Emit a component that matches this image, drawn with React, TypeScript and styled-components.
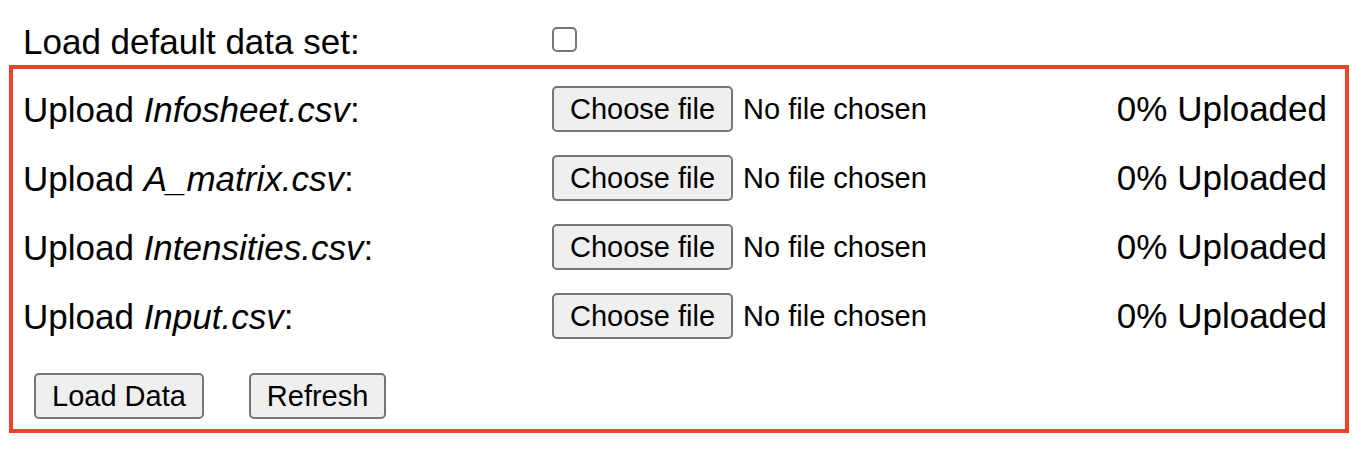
import { styled, createGlobalStyle } from "styled-components";

const GlobalStyle = createGlobalStyle`
  body {
    margin: 0;
    background: #ffffff;
    color: #000000;
    font-family: "Liberation Sans", Arial, Helvetica, sans-serif;
  }
`;

const Page = styled.div`
  padding-top: 22px;
`;

const TopRow = styled.div`
  display: grid;
  grid-template-columns: 529px auto;
  align-items: start;
  padding-left: 23px;
  height: 40px;
`;

const Label = styled.span`
  font-size: 35px;
  line-height: 40px;
  white-space: nowrap;

  em {
    font-style: italic;
  }
`;

const Checkbox = styled.input`
  appearance: none;
  margin: 5px 0 0 0;
  width: 25px;
  height: 25px;
  box-sizing: border-box;
  border: 2px solid #767676;
  border-radius: 5px;
  background: #ffffff;
`;

const UploadBox = styled.div`
  box-sizing: border-box;
  width: 1340px;
  margin: 3px 0 0 9px;
  border: 4px solid #e9432b;
  padding: 17px 0 10px 0;
  display: flex;
  flex-direction: column;
  gap: 24px;
`;

const FileRow = styled.div`
  display: grid;
  grid-template-columns: 529px auto 1fr auto;
  align-items: center;
  height: 45px;
  padding: 0 18px 0 10px;

  ${Label} {
    line-height: 45px;
  }
`;

const Button = styled.button`
  box-sizing: border-box;
  height: 46px;
  padding: 1px 16px 0;
  border: 2px solid #767676;
  border-radius: 5px;
  background: #efefef;
  color: #000000;
  font-family: "Liberation Sans", Arial, Helvetica, sans-serif;
  font-size: 29px;
  line-height: 41px;
  white-space: nowrap;
  cursor: default;
`;

const FileButton = styled(Button).attrs({ as: "label" })`
  display: inline-block;

  input {
    display: none;
  }
`;

const NoFile = styled.span`
  font-size: 29px;
  margin-left: 10px;
  white-space: nowrap;
`;

const Status = styled.span`
  font-size: 35px;
  white-space: nowrap;
  text-align: right;
`;

const ActionRow = styled.div`
  display: flex;
  gap: 45px;
  padding-left: 21px;
  margin-top: 11px;
`;

const files = ["Infosheet.csv", "A_matrix.csv", "Intensities.csv", "Input.csv"];

const App = () => {
  return (
    <Page>
      <GlobalStyle />
      <TopRow>
        <Label>Load default data set:</Label>
        <Checkbox type="checkbox" />
      </TopRow>

      <UploadBox>
        {files.map((name) => (
          <FileRow key={name}>
            <Label>
              Upload <em>{name}</em>:
            </Label>
            <FileButton>
              Choose file
              <input type="file" accept=".csv" />
            </FileButton>
            <NoFile>No file chosen</NoFile>
            <Status>0% Uploaded</Status>
          </FileRow>
        ))}

        <ActionRow>
          <Button>Load Data</Button>
          <Button>Refresh</Button>
        </ActionRow>
      </UploadBox>
    </Page>
  );
};

export default App;
